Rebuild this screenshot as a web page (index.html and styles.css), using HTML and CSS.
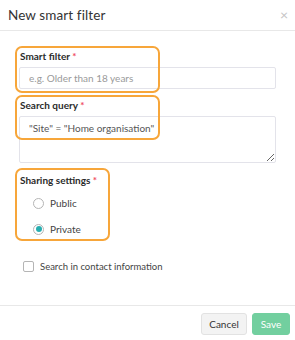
FILE: index.html
```html
<!DOCTYPE html>
<html>
<head>
<meta charset="utf-8">
<link rel="stylesheet" href="styles.css">
</head>
<body>
<div class="modal">
  <div class="modal-header">
    <span class="title">New smart filter</span>
    <span class="close">×</span>
  </div>
  <div class="modal-body">
    <div class="group">
      <label class="label">Smart filter <span class="req">*</span></label>
      <input class="input" type="text" placeholder="e.g. Older than 18 years">
    </div>
    <div class="group">
      <label class="label">Search query <span class="req">*</span></label>
      <textarea class="textarea">"Site" = "Home organisation"</textarea>
    </div>
    <div class="group">
      <label class="label">Sharing settings <span class="req">*</span></label>
      <div class="radios">
        <div class="radio-row"><span class="radio"></span><span>Public</span></div>
        <div class="radio-row"><span class="radio checked"></span><span>Private</span></div>
      </div>
    </div>
    <div class="check-row"><span class="checkbox"></span><span>Search in contact information</span></div>
    <div class="hl hl1"></div>
    <div class="hl hl2"></div>
    <div class="hl hl3"></div>
  </div>
  <div class="modal-footer">
    <button class="btn cancel">Cancel</button>
    <button class="btn save">Save</button>
  </div>
</div>
</body>
</html>
```
FILE: styles.css
```css
* { box-sizing: border-box; }
html, body { margin: 0; padding: 0; background: #fff; }
body { font-family: Lato, "Noto Sans", sans-serif; color: #333; width: 295px; height: 340px; overflow: hidden; }
.modal { width: 295px; display: flex; flex-direction: column; }
.modal-header {
  height: 31px; border-bottom: 1px solid #e8e8e8;
  display: flex; align-items: center; justify-content: space-between;
  padding: 0 7px 1px 8px;
}
.title { font-size: 13.5px; color: #333; letter-spacing: 0.1px; }
.close { font-size: 14px; color: #c4c4c4; line-height: 1; }
.modal-body { position: relative; padding: 19px 19px 0 19px; height: 274px; }
.group { display: flex; flex-direction: column; }
.label { font-size: 10px; font-weight: bold; line-height: 12px; height: 12px; margin-bottom: 5px; color: #2b2b2b; padding-left: 1px; }
.req { color: #ef4b5f; }
.input {
  height: 22px; border: 1px solid #e3e3ea; border-radius: 2px;
  font-family: inherit; font-size: 10px; padding: 0 9px; color: #555; outline: none;
}
.input::placeholder { color: #9a9a9a; }
.group + .group { margin-top: 10px; }
.textarea {
  height: 47px; border: 1px solid #e3e3ea; border-radius: 2px;
  font-family: inherit; font-size: 10px; padding: 5px 9px; color: #555; resize: vertical; outline: none;
  line-height: 12px;
}
.group:nth-child(3) { margin-top: 11px; }
.radios { display: flex; flex-direction: column; gap: 14px; padding: 6px 0 0 14px; }
.radio-row { display: flex; align-items: center; gap: 6px; font-size: 10px; color: #444; height: 12px; }
.radio { width: 11px; height: 11px; border: 1px solid #b5b5b5; border-radius: 50%; display: flex; align-items: center; justify-content: center; }
.radio.checked::after { content: ""; width: 6px; height: 6px; border-radius: 50%; background: #27aeb0; }
.check-row { display: flex; align-items: center; gap: 6px; font-size: 9.5px; color: #444; margin-top: 25px; padding-left: 4px; height: 12px; }
.checkbox { width: 11px; height: 11px; border: 1px solid #b5b5b5; border-radius: 2px; }
.hl { position: absolute; border: 2px solid #f7a63a; border-radius: 7px; }
.hl1 { left: 15px; top: 15px; width: 145px; height: 47px; }
.hl2 { left: 15px; top: 64px; width: 145px; height: 45px; }
.hl3 { left: 15px; top: 137px; width: 95px; height: 73px; }
.modal-footer {
  border-top: 1px solid #e8e8e8; height: 35px;
  display: flex; justify-content: flex-end; align-items: flex-start; gap: 5px;
  padding: 7px 5px 0 0;
}
.btn { height: 22px; border-radius: 3px; font-family: inherit; font-size: 10px; padding: 0; }
.cancel { width: 46px; background: #f3f3f3; border: 1px solid #e2e2e2; color: #333; }
.save { width: 38px; background: #72cf9f; border: 1px solid #72cf9f; color: #fff; }
```
